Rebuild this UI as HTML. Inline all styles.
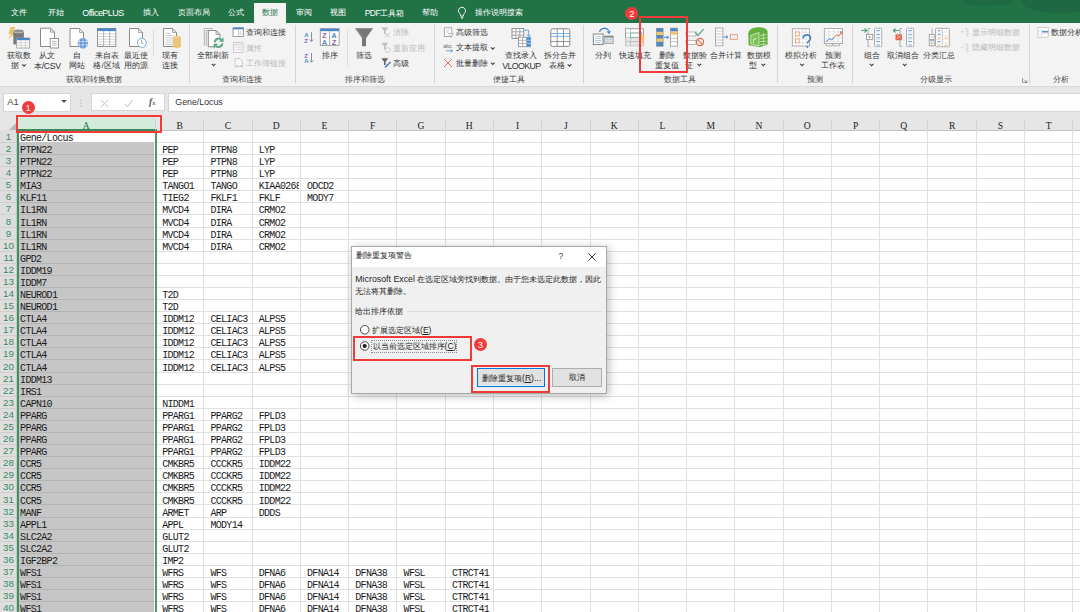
<!DOCTYPE html><html><head><meta charset="utf-8"><style>
*{margin:0;padding:0;box-sizing:border-box}
html,body{width:1080px;height:612px;overflow:hidden;background:#fff}
body{position:relative;font-family:"Liberation Sans",sans-serif;color:#262626}
.a{position:absolute}
.t{position:absolute;white-space:nowrap;line-height:1}
.tab{position:absolute;top:7.5px;font-size:7.7px;color:#fff;white-space:nowrap;line-height:10px}
.lb{position:absolute;font-size:7.8px;color:#333;white-space:nowrap;line-height:10px;transform:translateX(-50%)}
.gl{position:absolute;top:74px;font-size:7.6px;color:#444;white-space:nowrap;line-height:10px;transform:translateX(-50%)}
.sm{position:absolute;font-size:7.8px;color:#333;white-space:nowrap;line-height:10px}
.dis{color:#b9b9b9}
.sep{position:absolute;top:25px;height:58px;width:1px;background:#d4d4d4}
.cell{position:absolute;font-family:"Liberation Mono",monospace;font-size:10px;letter-spacing:-0.7px;color:#1a1a1a;white-space:nowrap;line-height:10px}
svg{position:absolute;overflow:visible}
.lat{font-size:8.8px;letter-spacing:-0.35px}
</style></head><body>
<div class="a" style="left:0;top:0;width:1080px;height:23px;background:#217346"></div>
<svg style="left:0;top:0" width="1080" height="23"><path d="M964 0V4.8C980 6.8 1000 5.8 1013 4.2V0Z" fill="#1f6a42"/><path d="M1022 0C1021 6 1030 11.5 1050 13C1062 13.6 1072 12.4 1080 11.5V0Z" fill="#1f6843"/></svg>
<div class="tab" style="left:10.8px">文件</div>
<div class="tab" style="left:48.3px">开始</div>
<div class="tab" style="left:82.3px"><span class="lat" style="font-size:9px;letter-spacing:-0.55px">OfficePLUS</span></div>
<div class="tab" style="left:143px">插入</div>
<div class="tab" style="left:177.5px">页面布局</div>
<div class="tab" style="left:227.5px">公式</div>
<div class="tab" style="left:295.8px">审阅</div>
<div class="tab" style="left:330px">视图</div>
<div class="tab" style="left:364.7px"><span class="lat" style="font-size:8.6px;letter-spacing:-0.6px">PDF</span>工具箱</div>
<div class="tab" style="left:421.7px">帮助</div>
<div class="tab" style="left:474.7px">操作说明搜索</div>
<div class="a" style="left:254px;top:3px;width:32px;height:20px;background:#f3f3f3"></div>
<div class="tab" style="left:261.7px;color:#217346">数据</div>
<svg style="left:456px;top:6px" width="12" height="13" viewBox="0 0 12 13"><path d="M6 1.2a3.6 3.6 0 0 0-2.2 6.4c.5.5.7 1 .7 1.6v.8h3v-.8c0-.6.2-1.1.7-1.6A3.6 3.6 0 0 0 6 1.2z" fill="none" stroke="#fff" stroke-width="0.9"/><path d="M4.6 11.2h2.8M5 12.2h2" stroke="#fff" stroke-width="0.8"/></svg>
<div class="a" style="left:0;top:23px;width:1080px;height:64px;background:#f3f3f3"></div>
<div class="a" style="left:0;top:86px;width:1080px;height:1px;background:#dadada"></div>
<div class="lb" style="left:18.6px;top:51px">获取数</div>
<div class="lb" style="left:15px;top:61px">据</div>
<div class="lb" style="left:47.3px;top:51px">从文</div>
<div class="lb" style="left:47.3px;top:61px">本<span class="lat">/CSV</span></div>
<div class="lb" style="left:77px;top:51px">自</div>
<div class="lb" style="left:77px;top:61px">网站</div>
<div class="lb" style="left:106.5px;top:51px">来自表</div>
<div class="lb" style="left:106.5px;top:61px">格/区域</div>
<div class="lb" style="left:136.4px;top:51px">最近使</div>
<div class="lb" style="left:136.4px;top:61px">用的源</div>
<div class="lb" style="left:170.4px;top:51px">现有</div>
<div class="lb" style="left:170.4px;top:61px">连接</div>
<div class="gl" style="left:94.3px;top:75px">获取和转换数据</div>
<div class="lb" style="left:212.5px;top:51px">全部刷新</div>
<div class="sm" style="left:245.6px;top:28.2px">查询和连接</div>
<div class="sm dis" style="left:245.6px;top:43.5px">属性</div>
<div class="sm dis" style="left:245.6px;top:59.3px">工作簿链接</div>
<div class="gl" style="left:242px;top:75px">查询和连接</div>
<div class="lb" style="left:330px;top:51px">排序</div>
<div class="lb" style="left:364.3px;top:51px">筛选</div>
<div class="sm dis" style="left:393px;top:28.3px">清除</div>
<div class="sm dis" style="left:393px;top:43.5px">重新应用</div>
<div class="sm" style="left:393px;top:59px">高级</div>
<div class="gl" style="left:364.8px;top:75px">排序和筛选</div>
<div class="sm" style="left:455.7px;top:28.3px">高级筛选</div>
<div class="sm" style="left:455.7px;top:43.3px">文本提取</div>
<div class="sm" style="left:455.7px;top:59px">批量删除</div>
<div class="lb" style="left:521px;top:51px">查找录入</div>
<div class="lb" style="left:521.3px;top:61px"><span class="lat" style="letter-spacing:-0.6px">VLOOKUP</span></div>
<div class="lb" style="left:560px;top:51px">拆分合并</div>
<div class="lb" style="left:557px;top:61px">表格</div>
<div class="gl" style="left:509.3px;top:75px">便捷工具</div>
<div class="lb" style="left:603px;top:51px">分列</div>
<div class="lb" style="left:634.8px;top:51px">快速填充</div>
<div class="lb" style="left:667px;top:51px">删除</div>
<div class="lb" style="left:666.8px;top:61px">重复值</div>
<div class="lb" style="left:695px;top:51px">数据验</div>
<div class="lb" style="left:689px;top:61px">证</div>
<div class="lb" style="left:726.4px;top:51px">合并计算</div>
<div class="lb" style="left:758.7px;top:51px">数据模</div>
<div class="lb" style="left:753px;top:61px">型</div>
<div class="gl" style="left:680px;top:75px">数据工具</div>
<div class="lb" style="left:801px;top:51px">模拟分析</div>
<div class="lb" style="left:833.3px;top:51px">预测</div>
<div class="lb" style="left:833px;top:61px">工作表</div>
<div class="gl" style="left:815px;top:75px">预测</div>
<div class="lb" style="left:872px;top:51px">组合</div>
<div class="lb" style="left:903px;top:51px">取消组合</div>
<div class="lb" style="left:938.9px;top:51px">分类汇总</div>
<div class="sm dis" style="left:971.7px;top:27.5px">显示明细数据</div>
<div class="sm dis" style="left:971.7px;top:43.2px">隐藏明细数据</div>
<div class="gl" style="left:935.8px;top:75px">分级显示</div>
<div class="sm" style="left:1050.5px;top:27.5px">数据分析</div>
<div class="gl" style="left:1061px;top:75px">分析</div>
<div class="sep" style="left:189.0px"></div>
<div class="sep" style="left:295.0px"></div>
<div class="sep" style="left:434.0px"></div>
<div class="sep" style="left:582.8px"></div>
<div class="sep" style="left:777.1px"></div>
<div class="sep" style="left:851.7px"></div>
<div class="sep" style="left:1029.3px"></div>
<div class="a" style="left:152.7px;top:29.7px;width:1px;height:26.900000000000002px;background:#dcdcdc"></div>
<div class="a" style="left:346.6px;top:29.8px;width:1px;height:35.900000000000006px;background:#dcdcdc"></div>
<svg style="left:0;top:0" width="1080" height="90" viewBox="0 0 1080 90"><path d="M22.2 64.3l1.8 1.8 1.8-1.8" fill="none" stroke="#444" stroke-width="1.1"/><path d="M567.7 64.39999999999999l1.8 1.8 1.8-1.8" fill="none" stroke="#444" stroke-width="1.1"/><path d="M10.5 27 L15.5 27 L12.8 32.5 L15.2 32.5 L8.3 39.8 L10.8 34 L8.4 34 Z" fill="#ecc46c"/><rect x="13.3" y="30.5" width="10.6" height="14" rx="1" fill="#7b7b7b"/><ellipse cx="18.6" cy="31" rx="5.3" ry="1.8" fill="#8f8f8f" stroke="#f3f3f3" stroke-width="0.5"/><rect x="16.7" y="38" width="13" height="10" fill="#fff" stroke="#999" stroke-width="0.8"/><rect x="16.7" y="38" width="13" height="2.2" fill="#4a86c8"/><path d="M16.7 42.7H29.7M16.7 45.3H29.7M21 40V48M25.4 40V48" stroke="#bbb" stroke-width="0.6"/><path d="M40.5 28.2H50.5L54.5 32.2V46.5H40.5Z" fill="#fff" stroke="#8a8a8a" stroke-width="1" stroke-linejoin="miter"/><path d="M50.5 28.2V32.2H54.5Z" fill="#e8e8e8" stroke="#8a8a8a" stroke-width="0.7" stroke-linejoin="miter"/><rect x="50.2" y="38.5" width="8.3" height="9.5" fill="#fff" stroke="#888" stroke-width="0.9"/><path d="M52 41.3h4.8M52 43.2h4.8M52 45.1h4.8" stroke="#888" stroke-width="0.6"/><path d="M70 28.5H79.5L83.5 32.5V46.5H70Z" fill="#fff" stroke="#8a8a8a" stroke-width="1" stroke-linejoin="miter"/><path d="M79.5 28.5V32.5H83.5Z" fill="#e8e8e8" stroke="#8a8a8a" stroke-width="0.7" stroke-linejoin="miter"/><circle cx="82.9" cy="43.2" r="5.2" fill="#5b93d3"/><path d="M77.8 41.6h10.2M77.8 44.8h10.2M82.9 38v10.4M80.2 38.6c-1.5 3-1.5 6.5 0 9.3M85.6 38.6c1.5 3 1.5 6.5 0 9.3" stroke="#fff" stroke-width="0.55" fill="none"/><rect x="97.5" y="28.5" width="18.3" height="18" fill="#fff" stroke="#888" stroke-width="0.9"/><rect x="97.5" y="28.3" width="18.3" height="2.8" fill="#4a86c8"/><path d="M97.5 33.8h18.3M97.5 36.5h18.3M97.5 39.2h18.3M97.5 41.9h18.3M97.5 44.5h18.3" stroke="#bbb" stroke-width="0.6"/><path d="M103.6 31V46.5M109.7 31V46.5" stroke="#999" stroke-width="0.7"/><path d="M129.5 28.5H138.5L142.5 32.5V46.5H129.5Z" fill="#fff" stroke="#8a8a8a" stroke-width="1" stroke-linejoin="miter"/><path d="M138.5 28.5V32.5H142.5Z" fill="#e8e8e8" stroke="#8a8a8a" stroke-width="0.7" stroke-linejoin="miter"/><circle cx="141.8" cy="42.9" r="4.5" fill="#fff" stroke="#7ea9d8" stroke-width="1"/><path d="M141.6 40.2v3h2" fill="none" stroke="#888" stroke-width="0.7"/><path d="M163.5 28.5H172.5L176.5 32.5V46.5H163.5Z" fill="#fff" stroke="#8a8a8a" stroke-width="1" stroke-linejoin="miter"/><path d="M172.5 28.5V32.5H176.5Z" fill="#e8e8e8" stroke="#8a8a8a" stroke-width="0.7" stroke-linejoin="miter"/><path d="M165.5 33.4h5M165.5 35.6h8M165.5 37.8h8M165.5 40h8M165.5 42.2h8M165.5 44.4h8" stroke="#aaa" stroke-width="0.6"/><path d="M173 37.5V46.5a4 1.4 0 0 0 8 0V37.5Z" fill="#ebc67a"/><ellipse cx="177" cy="37.5" rx="4" ry="1.4" fill="#f0d294" stroke="#e3b968" stroke-width="0.4"/><path d="M204.3 45.5V28.5H213M206.3 46V30.5H215" fill="none" stroke="#9a9a9a" stroke-width="0.7"/><path d="M208.3 30.5H216L220 34.5V46.8H208.3Z" fill="#fff" stroke="#8a8a8a" stroke-width="1" stroke-linejoin="miter"/><path d="M216 30.5V34.5H220Z" fill="#e8e8e8" stroke="#8a8a8a" stroke-width="0.7" stroke-linejoin="miter"/><circle cx="218.6" cy="42.8" r="5.6" fill="#f3f3f3"/><path d="M214.9 42.2a3.8 3.8 0 0 1 6.6-2.4M222.3 43.4a3.8 3.8 0 0 1-6.6 2.4" fill="none" stroke="#5fa684" stroke-width="2"/><path d="M223.6 37.2v4.6h-4.6zM213.6 48.4v-4.6h4.6z" fill="#5fa684"/><path d="M211.79999999999998 63.9l1.8 1.8 1.8-1.8" fill="none" stroke="#444" stroke-width="1.1"/><rect x="233" y="27.8" width="10.5" height="8.6" fill="#fff" stroke="#888" stroke-width="0.8"/><rect x="233" y="27.6" width="10.5" height="1.8" fill="#4a86c8"/><path d="M238.5 29.4V36.4M239.5 32h3M239.5 34h3" stroke="#aaa" stroke-width="0.6"/><rect x="233.5" y="42.6" width="9.5" height="9.8" fill="#f7f3f7" stroke="#c8c0c8" stroke-width="0.8"/><path d="M234 44.5h8.5M235.5 47h1M237.5 47h4M235.5 49.5h1M237.5 49.5h4" stroke="#c8c0c8" stroke-width="0.6"/><path d="M235 58.5h5l2.5 2.5V66.5H235Z" fill="#f7f3f7" stroke="#c8c0c8" stroke-width="0.8"/><path d="M237 67.5c-1.5 0-1.5-1.8 0-1.8h1.5M240 65.7h1.5c1.5 0 1.5 1.8 0 1.8" fill="none" stroke="#c8c0c8" stroke-width="0.6"/><text x="304.2" y="37" font-family="Liberation Sans" font-size="6" font-weight="bold" fill="#4f8bc9">A</text><text x="304.2" y="42.5" font-family="Liberation Sans" font-size="6" font-weight="bold" fill="#9159b5">Z</text><path d="M311.5 32.3V41M309.8 39.5l1.7 2 1.7-2" fill="none" stroke="#777" stroke-width="0.8"/><text x="304.2" y="57.8" font-family="Liberation Sans" font-size="6" font-weight="bold" fill="#9159b5">Z</text><text x="304.2" y="63.3" font-family="Liberation Sans" font-size="6" font-weight="bold" fill="#4f8bc9">A</text><path d="M311.5 53V61.8M309.8 60.3l1.7 2 1.7-2" fill="none" stroke="#777" stroke-width="0.8"/><rect x="320.3" y="28.8" width="18.8" height="16.6" fill="#fff" stroke="#999" stroke-width="0.9"/><rect x="320.3" y="28.6" width="18.8" height="2.6" fill="#4a86c8"/><path d="M329.7 31.2V45.4" stroke="#999" stroke-width="0.9"/><text x="322.3" y="37.6" font-family="Liberation Sans" font-size="7" font-weight="bold" fill="#9159b5">Z</text><text x="322" y="44.6" font-family="Liberation Sans" font-size="7" font-weight="bold" fill="#4f8bc9">A</text><text x="331.6" y="37.6" font-family="Liberation Sans" font-size="7" font-weight="bold" fill="#4f8bc9">A</text><text x="331.9" y="44.6" font-family="Liberation Sans" font-size="7" font-weight="bold" fill="#9159b5">Z</text><path d="M355 28.2H373L366 38.2V46.2H362V38.2Z" fill="#777"/><path d="M356.8 29.2L362.5 37.5" stroke="#aaa" stroke-width="0.6"/><path d="M381.3 27.5H388.3L385.6 31V34H384V31Z" fill="#bdbdbd"/><path d="M384.5 32.5l5.5 5M390 32.5l-5.5 5" stroke="#c4c4c4" stroke-width="0.8"/><path d="M381.3 42.8H388.3L385.6 46.3V49.3H384V46.3Z" fill="#bdbdbd"/><circle cx="387.8" cy="50" r="2.5" fill="none" stroke="#c4c4c4" stroke-width="0.8"/><path d="M381.3 58.3H388.3L385.6 61.8V65H384V61.8Z" fill="#666"/><path d="M385 67.3L390.7 62" stroke="#4a86c8" stroke-width="1.6"/><rect x="444.3" y="27.8" width="7.5" height="8.6" fill="#fff" stroke="#999" stroke-width="0.8"/><path d="M445.8 30h4.5M445.8 32h3" stroke="#9bbbe0" stroke-width="0.6"/><path d="M448.5 33.5h5l-2 2.3v1.5h-1v-1.5z" fill="#fff" stroke="#999" stroke-width="0.6"/><text x="443.2" y="48.4" font-family="Liberation Sans" font-size="5.5" fill="#666">abc</text><path d="M446 50.8h6.5M450.8 49.3l1.7 1.5-1.7 1.5" fill="none" stroke="#5b9bd5" stroke-width="0.9"/><path d="M444 59l8 8M452 59l-8 8" stroke="#ea5b5b" stroke-width="0.9"/><path d="M491.0 47.300000000000004l1.8 1.8 1.8-1.8" fill="none" stroke="#444" stroke-width="1.1"/><path d="M491.0 62.7l1.8 1.8 1.8-1.8" fill="none" stroke="#444" stroke-width="1.1"/><rect x="512" y="28.5" width="11.7" height="10" fill="#fff" stroke="#888" stroke-width="0.9"/><path d="M512 31.8h11.7M512 35.1h11.7M515.9 28.5v10M519.8 28.5v10" stroke="#888" stroke-width="0.7"/><rect x="518.5" y="37.2" width="12" height="9.5" fill="#fff" stroke="#999" stroke-width="0.9"/><path d="M518.5 40.3h12M518.5 43.5h12M522.5 37.2v9.5M526.5 37.2v9.5" stroke="#999" stroke-width="0.7"/><rect x="526.7" y="37.2" width="3.8" height="9.5" fill="#4a90d9"/><path d="M526.7 40.3h3.8M526.7 43.5h3.8" stroke="#fff" stroke-width="0.5"/><path d="M523.7 30.2h5v6M527 34.5l1.7 1.8 1.7-1.8" fill="none" stroke="#4a90d9" stroke-width="0.8"/><rect x="550.8" y="28.8" width="19" height="17.6" rx="1.5" fill="#fff" stroke="#888" stroke-width="1"/><path d="M557.2 28.8v17.6M563.5 28.8v17.6M550.8 41.5h19" stroke="#888" stroke-width="0.9"/><path d="M550.8 33.5h19M550.8 36.4h19" stroke="#5aa0dc" stroke-width="0.8"/><rect x="593.3" y="34" width="9.7" height="10.6" fill="#fff" stroke="#777" stroke-width="0.9"/><path d="M595 36.5h6.3M595 38.5h6.3M595 40.5h6.3M595 42.5h6.3" stroke="#7aaee0" stroke-width="0.6"/><rect x="604.2" y="36" width="9" height="7.6" fill="#ddd" stroke="#999" stroke-width="0.8"/><rect x="604.2" y="36" width="9" height="1.5" fill="#888"/><path d="M606 39.5h2M609.5 39.5h2M606 41.7h2M609.5 41.7h2" stroke="#8fb8e0" stroke-width="0.6"/><path d="M599.5 31.8c1-3.8 6.5-5 9.5-1.2" fill="none" stroke="#4a86c8" stroke-width="1.3"/><path d="M606.6 31.3h4.6l-2.3 3z" fill="#4a86c8"/><rect x="625.5" y="28.7" width="18" height="17" fill="#fff" stroke="#999" stroke-width="0.9"/><rect x="625.5" y="37.4" width="18" height="8.3" fill="#e6e6e6"/><path d="M625.5 33h18M625.5 37.4h18M625.5 41.6h18M630.5 28.7v17" stroke="#aaa" stroke-width="0.6"/><rect x="630.5" y="33" width="11" height="4.4" fill="none" stroke="#6db596" stroke-width="0.7"/><path d="M641.5 35.2L645.2 35.3 643 38.7 645 38.8 641 45.8 642 40.5 640.3 40.5Z" fill="#efc46a"/><rect x="656.5" y="28.2" width="6.6" height="18" fill="#4a86c8" stroke="#777" stroke-width="0.5"/><rect x="656.5" y="31.8" width="6.6" height="3.3" fill="#f0c56f"/><rect x="656.5" y="38.5" width="6.6" height="3.3" fill="#f0c56f"/><path d="M664 37.3h4.2M666.8 35.8l1.8 1.5-1.8 1.5" fill="none" stroke="#4a86c8" stroke-width="1"/><rect x="670.6" y="28.2" width="6.8" height="18" fill="#fff" stroke="#999" stroke-width="0.8"/><rect x="670.6" y="28.2" width="6.8" height="3.3" fill="#4a86c8"/><rect x="670.6" y="31.5" width="6.8" height="3.3" fill="#f0c56f"/><path d="M670.6 38.3h6.8M670.6 41.7h6.8" stroke="#999" stroke-width="0.6"/><rect x="686" y="32" width="10" height="4" fill="#fff" stroke="#999" stroke-width="0.7"/><rect x="686" y="40.3" width="10" height="4" fill="#fff" stroke="#999" stroke-width="0.7"/><path d="M695.2 32.5l2.6 3 5.8-6.3" fill="none" stroke="#5aa386" stroke-width="1.2"/><circle cx="700" cy="42" r="3.6" fill="#f3f3f3" stroke="#e06a4a" stroke-width="1.2"/><path d="M697.6 39.6l4.8 4.8" stroke="#e06a4a" stroke-width="1.1"/><path d="M697.5 63.9l1.8 1.8 1.8-1.8" fill="none" stroke="#444" stroke-width="1.1"/><rect x="715.5" y="28" width="7.4" height="17.8" fill="#fff" stroke="#999" stroke-width="0.8"/><path d="M715.5 31h7.4M715.5 34h7.4M715.5 37h7.4M715.5 40h7.4M715.5 43h7.4" stroke="#aaa" stroke-width="0.6"/><path d="M723.5 37h4.3M726.3 35.6l1.6 1.4-1.6 1.4" fill="none" stroke="#4a86c8" stroke-width="1"/><rect x="730.3" y="34.8" width="7" height="4.4" fill="#fff" stroke="#e07a6a" stroke-width="0.8"/><path d="M732 37h3.6" stroke="#9ab" stroke-width="0.5"/><path d="M748.3 33.2C748.8 29.2 753.5 27.2 758.8 27.2C764 27.2 767.4 29 767.6 31.5V44.6L759.5 47.2L748.6 45.2Z" fill="#62b13f"/><path d="M750.8 35.3L759 32.6V46.2L750.8 44.2Z" fill="#7cc257" stroke="#e9f5e2" stroke-width="0.7"/><path d="M760 35.6L766.6 34.6M760 38.6L766.6 37.9M760 41.6L766.6 41.1M760 44.6L766.6 44.2M763.3 33.2V45.6" stroke="#e9f5e2" stroke-width="0.6"/><path d="M753.5 43.5V39.5l2.2 -1M755.7 38.5l-1.2-0.2M755.7 38.5l-.3 1.2" fill="none" stroke="#fff" stroke-width="0.6"/><path d="M761.5 63.9l1.8 1.8 1.8-1.8" fill="none" stroke="#444" stroke-width="1.1"/><rect x="792.3" y="28.8" width="17.2" height="17.2" fill="#fff" stroke="#999" stroke-width="0.8"/><path d="M792.3 32.2h17.2M792.3 35.6h17.2M792.3 39h17.2M792.3 42.4h17.2M795.8 28.8v17.2M799.2 28.8v17.2M802.6 28.8v17.2M806 28.8v17.2" stroke="#ccc" stroke-width="0.5"/><rect x="795.5" y="32" width="3.8" height="3.8" fill="#fff" stroke="#f0a070" stroke-width="0.9"/><rect x="795.5" y="39" width="3.8" height="3.8" fill="#fff" stroke="#f0a070" stroke-width="0.9"/><path d="M803.2 38.5c0-2.5 1.8-3.6 3.7-3.6 2.2 0 3.7 1.3 3.7 3.3 0 2.6-3.3 2.6-3.3 5.3" fill="none" stroke="#4a86c8" stroke-width="1.6"/><circle cx="807.3" cy="46.8" r="1.1" fill="#4a86c8"/><path d="M800.2 63.9l1.8 1.8 1.8-1.8" fill="none" stroke="#444" stroke-width="1.1"/><rect x="824.3" y="28.6" width="18" height="15" fill="#fff" stroke="#999" stroke-width="0.8"/><path d="M824.3 31.8h18M824.3 35h18M824.3 38.2h18M824.3 41.4h18M828.8 28.6v15M833.3 28.6v15M837.8 28.6v15" stroke="#ccc" stroke-width="0.5"/><path d="M825.8 42l3.5-3.5 2.5 1.5 2.5-3" fill="none" stroke="#4a86c8" stroke-width="1"/><path d="M834.3 37l2.5-2 2 1.2 2.8-4" fill="none" stroke="#e0633e" stroke-width="1"/><path d="M839.5 31.5h3v3z" fill="#e0633e"/><path d="M826 43.6v2.2h6.3v-2.2M833.3 43.6v2.2h6.3v-2.2" fill="none" stroke="#999" stroke-width="0.7"/><path d="M868 28.5v18M868 28.5h2M868 46.5h2" fill="none" stroke="#999" stroke-width="0.8"/><rect x="874.5" y="28.3" width="7.2" height="18.4" rx="1" fill="#fff" stroke="#999" stroke-width="0.8"/><path d="M876.3 30.7h3.6" stroke="#5b93d3" stroke-width="0.9"/><path d="M874.5 32.1h7.2" stroke="#ccc" stroke-width="0.5"/><path d="M876.3 34.3h3.6" stroke="#5b93d3" stroke-width="0.9"/><path d="M874.5 35.699999999999996h7.2" stroke="#ccc" stroke-width="0.5"/><path d="M876.3 37.9h3.6" stroke="#5b93d3" stroke-width="0.9"/><path d="M874.5 39.3h7.2" stroke="#ccc" stroke-width="0.5"/><path d="M876.3 41.5h3.6" stroke="#5b93d3" stroke-width="0.9"/><path d="M874.5 42.9h7.2" stroke="#ccc" stroke-width="0.5"/><path d="M876.3 45.1h3.6" stroke="#5b93d3" stroke-width="0.9"/><path d="M874.5 46.5h7.2" stroke="#ccc" stroke-width="0.5"/><path d="M861 30.5h5.5M864.5 28.5l2.3 2-2.3 2" fill="none" stroke="#5aa386" stroke-width="1.2"/><rect x="866.5" y="34.6" width="6.3" height="5" fill="#fff" stroke="#888" stroke-width="0.7"/><path d="M868 37.1h3.3M869.65 35.5v3.3" stroke="#777" stroke-width="0.5"/><path d="M869.9000000000001 63.9l1.8 1.8 1.8-1.8" fill="none" stroke="#444" stroke-width="1.1"/><path d="M900 28.5v18M900 28.5h2M900 46.5h2" fill="none" stroke="#999" stroke-width="0.8"/><rect x="906.5" y="28.3" width="7.2" height="18.4" rx="1" fill="#fff" stroke="#999" stroke-width="0.8"/><path d="M908.3 30.7h3.6" stroke="#5b93d3" stroke-width="0.9"/><path d="M906.5 32.1h7.2" stroke="#ccc" stroke-width="0.5"/><path d="M908.3 34.3h3.6" stroke="#5b93d3" stroke-width="0.9"/><path d="M906.5 35.699999999999996h7.2" stroke="#ccc" stroke-width="0.5"/><path d="M908.3 37.9h3.6" stroke="#5b93d3" stroke-width="0.9"/><path d="M906.5 39.3h7.2" stroke="#ccc" stroke-width="0.5"/><path d="M908.3 41.5h3.6" stroke="#5b93d3" stroke-width="0.9"/><path d="M906.5 42.9h7.2" stroke="#ccc" stroke-width="0.5"/><path d="M908.3 45.1h3.6" stroke="#5b93d3" stroke-width="0.9"/><path d="M906.5 46.5h7.2" stroke="#ccc" stroke-width="0.5"/><path d="M899.5 30.5h-6M895.6 28.5l-2.3 2 2.3 2" fill="none" stroke="#5aa386" stroke-width="1.2"/><rect x="895.5" y="34.2" width="6.4" height="6" fill="#e0634a"/><path d="M897 38.8l3.4-3.4M897.2 35.5h0.8M900 38.8h0.4" stroke="#fff" stroke-width="0.8"/><path d="M902.9000000000001 63.9l1.8 1.8 1.8-1.8" fill="none" stroke="#444" stroke-width="1.1"/><path d="M932 28.5v18" stroke="#999" stroke-width="0.8"/><rect x="929.2" y="34.4" width="5" height="5" fill="#fff" stroke="#888" stroke-width="0.7"/><rect x="929.2" y="40.8" width="5" height="5" fill="#fff" stroke="#888" stroke-width="0.7"/><path d="M930.5 36.9h2.4M930.5 43.3h2.4M931.7 42v2.6" stroke="#777" stroke-width="0.5"/><rect x="935.5" y="28.3" width="13.8" height="18.4" rx="1" fill="#fff" stroke="#999" stroke-width="0.8"/><path d="M942.4 28.3v18.4" stroke="#aaa" stroke-width="0.6"/><path d="M935.5 32.1h13.8" stroke="#ccc" stroke-width="0.5"/><path d="M937.6 30.7h3" stroke="#5b93d3" stroke-width="0.9"/><path d="M935.5 35.699999999999996h13.8" stroke="#ccc" stroke-width="0.5"/><path d="M937.6 34.3h3" stroke="#5b93d3" stroke-width="0.9"/><path d="M935.5 39.3h13.8" stroke="#ccc" stroke-width="0.5"/><path d="M937.6 37.9h3" stroke="#f0a060" stroke-width="0.9"/><path d="M944.5 37.9h3" stroke="#f0a060" stroke-width="0.9"/><path d="M935.5 42.9h13.8" stroke="#ccc" stroke-width="0.5"/><path d="M937.6 41.5h3" stroke="#5b93d3" stroke-width="0.9"/><path d="M935.5 46.5h13.8" stroke="#ccc" stroke-width="0.5"/><path d="M937.6 45.1h3" stroke="#f0a060" stroke-width="0.9"/><path d="M944.5 45.1h3" stroke="#f0a060" stroke-width="0.9"/><path d="M960.5 31.8h4M962.5 29.8v4M965 28.5h3.5M966.5 31h2.5M966.5 33.5h2.5M966.5 36h2.5M966.8 28.5v8" stroke="#cfcfcf" stroke-width="0.7" fill="none"/><path d="M960.5 47.2h4M965 44h3.5M966.5 46.5h2.5M966.5 49h2.5M966.5 51.5h2.5M966.8 44v8" stroke="#cfcfcf" stroke-width="0.7" fill="none"/><path d="M1022.5 78v4.3h4.3M1024 79.5l3 3M1027 80.5v2h-2" fill="none" stroke="#777" stroke-width="0.7"/><rect x="1038" y="27.6" width="10.2" height="9.6" fill="#fff" stroke="#bbb" stroke-width="0.7"/><path d="M1041.5 27.6v9.6M1038 31h10.2M1038 34h10.2" stroke="#ccc" stroke-width="0.5"/><path d="M1042 31.8h6.3" stroke="#4a86c8" stroke-width="1.4"/></svg>
<div class="a" style="left:0;top:87px;width:1080px;height:25px;background:#e6e6e6"></div>
<div class="a" style="left:2.5px;top:93px;width:68px;height:18.5px;background:#fff;border:1px solid #d6d6d6"></div>
<div class="t" style="left:7.2px;top:98.4px;font-size:9.3px;color:#444">A1</div>
<svg style="left:61px;top:100px" width="6" height="3"><path d="M0 0h6L3 3z" fill="#555"/></svg>
<svg style="left:80px;top:99px" width="2" height="8"><circle cx="1" cy="1" r=".6" fill="#999"/><circle cx="1" cy="4" r=".6" fill="#999"/><circle cx="1" cy="7" r=".6" fill="#999"/></svg>
<div class="a" style="left:91px;top:93px;width:73.5px;height:18.2px;background:#fff;border:1px solid #d6d6d6"></div>
<svg style="left:99.5px;top:98.5px" width="9" height="9"><path d="M1 1l7 7M8 1l-7 7" stroke="#b5b5b5" stroke-width="0.9"/></svg>
<svg style="left:123.5px;top:98.5px" width="9" height="9"><path d="M1 5l2.5 2.8L8.5 1" fill="none" stroke="#b5b5b5" stroke-width="0.9"/></svg>
<div class="t" style="left:149px;top:98.2px;font-family:'Liberation Serif',serif;font-style:italic;font-weight:bold;font-size:9.5px;color:#555">f<span style="font-size:6.5px">x</span></div>
<div class="a" style="left:167.5px;top:93px;width:920px;height:18.8px;background:#fdfdfd;border:1px solid #d6d6d6"></div>
<div class="t" style="left:175.3px;top:97.5px;font-size:8.8px;color:#333">Gene/Locus</div>
<div class="a" style="left:0;top:111.5px;width:1080px;height:18.849999999999994px;background:#e6e6e6"></div>
<div class="a" style="left:0;top:129.85px;width:1080px;height:1px;background:#c4c4c4"></div>
<div class="a" style="left:0;top:130.35px;width:17px;height:500px;background:#dedede"></div>
<div class="a" style="left:17px;top:116.5px;width:138.5px;height:13.849999999999994px;background:#d3ebdd"></div>
<div class="a" style="left:17px;top:128.85px;width:139.5px;height:2px;background:#3a8a5c"></div>
<svg style="left:9px;top:123px" width="7" height="7"><path d="M7 0V7H0z" fill="#b8b8b8"/></svg>
<div class="a" style="left:155.00px;top:118.5px;width:1px;height:11.849999999999994px;background:#d0d0d0"></div>
<div class="a" style="left:203.28px;top:118.5px;width:1px;height:11.849999999999994px;background:#d0d0d0"></div>
<div class="a" style="left:251.56px;top:118.5px;width:1px;height:11.849999999999994px;background:#d0d0d0"></div>
<div class="a" style="left:299.84px;top:118.5px;width:1px;height:11.849999999999994px;background:#d0d0d0"></div>
<div class="a" style="left:348.12px;top:118.5px;width:1px;height:11.849999999999994px;background:#d0d0d0"></div>
<div class="a" style="left:396.40px;top:118.5px;width:1px;height:11.849999999999994px;background:#d0d0d0"></div>
<div class="a" style="left:444.68px;top:118.5px;width:1px;height:11.849999999999994px;background:#d0d0d0"></div>
<div class="a" style="left:492.96px;top:118.5px;width:1px;height:11.849999999999994px;background:#d0d0d0"></div>
<div class="a" style="left:541.24px;top:118.5px;width:1px;height:11.849999999999994px;background:#d0d0d0"></div>
<div class="a" style="left:589.52px;top:118.5px;width:1px;height:11.849999999999994px;background:#d0d0d0"></div>
<div class="a" style="left:637.80px;top:118.5px;width:1px;height:11.849999999999994px;background:#d0d0d0"></div>
<div class="a" style="left:686.08px;top:118.5px;width:1px;height:11.849999999999994px;background:#d0d0d0"></div>
<div class="a" style="left:734.36px;top:118.5px;width:1px;height:11.849999999999994px;background:#d0d0d0"></div>
<div class="a" style="left:782.64px;top:118.5px;width:1px;height:11.849999999999994px;background:#d0d0d0"></div>
<div class="a" style="left:830.92px;top:118.5px;width:1px;height:11.849999999999994px;background:#d0d0d0"></div>
<div class="a" style="left:879.20px;top:118.5px;width:1px;height:11.849999999999994px;background:#d0d0d0"></div>
<div class="a" style="left:927.48px;top:118.5px;width:1px;height:11.849999999999994px;background:#d0d0d0"></div>
<div class="a" style="left:975.76px;top:118.5px;width:1px;height:11.849999999999994px;background:#d0d0d0"></div>
<div class="a" style="left:1024.04px;top:118.5px;width:1px;height:11.849999999999994px;background:#d0d0d0"></div>
<div class="a" style="left:1072.32px;top:118.5px;width:1px;height:11.849999999999994px;background:#d0d0d0"></div>
<div class="t" style="left:81.25px;top:120.5px;font-family:'Liberation Serif',serif;font-size:9.6px;color:#217346;width:10px;text-align:center;line-height:10px">A</div>
<div class="t" style="left:174.64px;top:120.5px;font-family:'Liberation Serif',serif;font-size:9.6px;color:#222;width:10px;text-align:center;line-height:10px">B</div>
<div class="t" style="left:222.92px;top:120.5px;font-family:'Liberation Serif',serif;font-size:9.6px;color:#222;width:10px;text-align:center;line-height:10px">C</div>
<div class="t" style="left:271.20px;top:120.5px;font-family:'Liberation Serif',serif;font-size:9.6px;color:#222;width:10px;text-align:center;line-height:10px">D</div>
<div class="t" style="left:319.48px;top:120.5px;font-family:'Liberation Serif',serif;font-size:9.6px;color:#222;width:10px;text-align:center;line-height:10px">E</div>
<div class="t" style="left:367.76px;top:120.5px;font-family:'Liberation Serif',serif;font-size:9.6px;color:#222;width:10px;text-align:center;line-height:10px">F</div>
<div class="t" style="left:416.04px;top:120.5px;font-family:'Liberation Serif',serif;font-size:9.6px;color:#222;width:10px;text-align:center;line-height:10px">G</div>
<div class="t" style="left:464.32px;top:120.5px;font-family:'Liberation Serif',serif;font-size:9.6px;color:#222;width:10px;text-align:center;line-height:10px">H</div>
<div class="t" style="left:512.60px;top:120.5px;font-family:'Liberation Serif',serif;font-size:9.6px;color:#222;width:10px;text-align:center;line-height:10px">I</div>
<div class="t" style="left:560.88px;top:120.5px;font-family:'Liberation Serif',serif;font-size:9.6px;color:#222;width:10px;text-align:center;line-height:10px">J</div>
<div class="t" style="left:609.16px;top:120.5px;font-family:'Liberation Serif',serif;font-size:9.6px;color:#222;width:10px;text-align:center;line-height:10px">K</div>
<div class="t" style="left:657.44px;top:120.5px;font-family:'Liberation Serif',serif;font-size:9.6px;color:#222;width:10px;text-align:center;line-height:10px">L</div>
<div class="t" style="left:705.72px;top:120.5px;font-family:'Liberation Serif',serif;font-size:9.6px;color:#222;width:10px;text-align:center;line-height:10px">M</div>
<div class="t" style="left:754.00px;top:120.5px;font-family:'Liberation Serif',serif;font-size:9.6px;color:#222;width:10px;text-align:center;line-height:10px">N</div>
<div class="t" style="left:802.28px;top:120.5px;font-family:'Liberation Serif',serif;font-size:9.6px;color:#222;width:10px;text-align:center;line-height:10px">O</div>
<div class="t" style="left:850.56px;top:120.5px;font-family:'Liberation Serif',serif;font-size:9.6px;color:#222;width:10px;text-align:center;line-height:10px">P</div>
<div class="t" style="left:898.84px;top:120.5px;font-family:'Liberation Serif',serif;font-size:9.6px;color:#222;width:10px;text-align:center;line-height:10px">Q</div>
<div class="t" style="left:947.12px;top:120.5px;font-family:'Liberation Serif',serif;font-size:9.6px;color:#222;width:10px;text-align:center;line-height:10px">R</div>
<div class="t" style="left:995.40px;top:120.5px;font-family:'Liberation Serif',serif;font-size:9.6px;color:#222;width:10px;text-align:center;line-height:10px">S</div>
<div class="t" style="left:1043.68px;top:120.5px;font-family:'Liberation Serif',serif;font-size:9.6px;color:#222;width:10px;text-align:center;line-height:10px">T</div>
<div class="a" style="left:17px;top:141.94px;width:1063px;height:1px;background:#e0e0e0"></div>
<div class="a" style="left:0;top:141.94px;width:17px;height:1px;background:#cfcfcf"></div>
<div class="a" style="left:17px;top:154.02px;width:1063px;height:1px;background:#e0e0e0"></div>
<div class="a" style="left:0;top:154.02px;width:17px;height:1px;background:#cfcfcf"></div>
<div class="a" style="left:17px;top:166.10px;width:1063px;height:1px;background:#e0e0e0"></div>
<div class="a" style="left:0;top:166.10px;width:17px;height:1px;background:#cfcfcf"></div>
<div class="a" style="left:17px;top:178.19px;width:1063px;height:1px;background:#e0e0e0"></div>
<div class="a" style="left:0;top:178.19px;width:17px;height:1px;background:#cfcfcf"></div>
<div class="a" style="left:17px;top:190.28px;width:1063px;height:1px;background:#e0e0e0"></div>
<div class="a" style="left:0;top:190.28px;width:17px;height:1px;background:#cfcfcf"></div>
<div class="a" style="left:17px;top:202.36px;width:1063px;height:1px;background:#e0e0e0"></div>
<div class="a" style="left:0;top:202.36px;width:17px;height:1px;background:#cfcfcf"></div>
<div class="a" style="left:17px;top:214.44px;width:1063px;height:1px;background:#e0e0e0"></div>
<div class="a" style="left:0;top:214.44px;width:17px;height:1px;background:#cfcfcf"></div>
<div class="a" style="left:17px;top:226.53px;width:1063px;height:1px;background:#e0e0e0"></div>
<div class="a" style="left:0;top:226.53px;width:17px;height:1px;background:#cfcfcf"></div>
<div class="a" style="left:17px;top:238.62px;width:1063px;height:1px;background:#e0e0e0"></div>
<div class="a" style="left:0;top:238.62px;width:17px;height:1px;background:#cfcfcf"></div>
<div class="a" style="left:17px;top:250.70px;width:1063px;height:1px;background:#e0e0e0"></div>
<div class="a" style="left:0;top:250.70px;width:17px;height:1px;background:#cfcfcf"></div>
<div class="a" style="left:17px;top:262.78px;width:1063px;height:1px;background:#e0e0e0"></div>
<div class="a" style="left:0;top:262.78px;width:17px;height:1px;background:#cfcfcf"></div>
<div class="a" style="left:17px;top:274.87px;width:1063px;height:1px;background:#e0e0e0"></div>
<div class="a" style="left:0;top:274.87px;width:17px;height:1px;background:#cfcfcf"></div>
<div class="a" style="left:17px;top:286.96px;width:1063px;height:1px;background:#e0e0e0"></div>
<div class="a" style="left:0;top:286.96px;width:17px;height:1px;background:#cfcfcf"></div>
<div class="a" style="left:17px;top:299.04px;width:1063px;height:1px;background:#e0e0e0"></div>
<div class="a" style="left:0;top:299.04px;width:17px;height:1px;background:#cfcfcf"></div>
<div class="a" style="left:17px;top:311.12px;width:1063px;height:1px;background:#e0e0e0"></div>
<div class="a" style="left:0;top:311.12px;width:17px;height:1px;background:#cfcfcf"></div>
<div class="a" style="left:17px;top:323.21px;width:1063px;height:1px;background:#e0e0e0"></div>
<div class="a" style="left:0;top:323.21px;width:17px;height:1px;background:#cfcfcf"></div>
<div class="a" style="left:17px;top:335.30px;width:1063px;height:1px;background:#e0e0e0"></div>
<div class="a" style="left:0;top:335.30px;width:17px;height:1px;background:#cfcfcf"></div>
<div class="a" style="left:17px;top:347.38px;width:1063px;height:1px;background:#e0e0e0"></div>
<div class="a" style="left:0;top:347.38px;width:17px;height:1px;background:#cfcfcf"></div>
<div class="a" style="left:17px;top:359.47px;width:1063px;height:1px;background:#e0e0e0"></div>
<div class="a" style="left:0;top:359.47px;width:17px;height:1px;background:#cfcfcf"></div>
<div class="a" style="left:17px;top:371.55px;width:1063px;height:1px;background:#e0e0e0"></div>
<div class="a" style="left:0;top:371.55px;width:17px;height:1px;background:#cfcfcf"></div>
<div class="a" style="left:17px;top:383.63px;width:1063px;height:1px;background:#e0e0e0"></div>
<div class="a" style="left:0;top:383.63px;width:17px;height:1px;background:#cfcfcf"></div>
<div class="a" style="left:17px;top:395.72px;width:1063px;height:1px;background:#e0e0e0"></div>
<div class="a" style="left:0;top:395.72px;width:17px;height:1px;background:#cfcfcf"></div>
<div class="a" style="left:17px;top:407.81px;width:1063px;height:1px;background:#e0e0e0"></div>
<div class="a" style="left:0;top:407.81px;width:17px;height:1px;background:#cfcfcf"></div>
<div class="a" style="left:17px;top:419.89px;width:1063px;height:1px;background:#e0e0e0"></div>
<div class="a" style="left:0;top:419.89px;width:17px;height:1px;background:#cfcfcf"></div>
<div class="a" style="left:17px;top:431.98px;width:1063px;height:1px;background:#e0e0e0"></div>
<div class="a" style="left:0;top:431.98px;width:17px;height:1px;background:#cfcfcf"></div>
<div class="a" style="left:17px;top:444.06px;width:1063px;height:1px;background:#e0e0e0"></div>
<div class="a" style="left:0;top:444.06px;width:17px;height:1px;background:#cfcfcf"></div>
<div class="a" style="left:17px;top:456.14px;width:1063px;height:1px;background:#e0e0e0"></div>
<div class="a" style="left:0;top:456.14px;width:17px;height:1px;background:#cfcfcf"></div>
<div class="a" style="left:17px;top:468.23px;width:1063px;height:1px;background:#e0e0e0"></div>
<div class="a" style="left:0;top:468.23px;width:17px;height:1px;background:#cfcfcf"></div>
<div class="a" style="left:17px;top:480.32px;width:1063px;height:1px;background:#e0e0e0"></div>
<div class="a" style="left:0;top:480.32px;width:17px;height:1px;background:#cfcfcf"></div>
<div class="a" style="left:17px;top:492.40px;width:1063px;height:1px;background:#e0e0e0"></div>
<div class="a" style="left:0;top:492.40px;width:17px;height:1px;background:#cfcfcf"></div>
<div class="a" style="left:17px;top:504.49px;width:1063px;height:1px;background:#e0e0e0"></div>
<div class="a" style="left:0;top:504.49px;width:17px;height:1px;background:#cfcfcf"></div>
<div class="a" style="left:17px;top:516.57px;width:1063px;height:1px;background:#e0e0e0"></div>
<div class="a" style="left:0;top:516.57px;width:17px;height:1px;background:#cfcfcf"></div>
<div class="a" style="left:17px;top:528.65px;width:1063px;height:1px;background:#e0e0e0"></div>
<div class="a" style="left:0;top:528.65px;width:17px;height:1px;background:#cfcfcf"></div>
<div class="a" style="left:17px;top:540.74px;width:1063px;height:1px;background:#e0e0e0"></div>
<div class="a" style="left:0;top:540.74px;width:17px;height:1px;background:#cfcfcf"></div>
<div class="a" style="left:17px;top:552.83px;width:1063px;height:1px;background:#e0e0e0"></div>
<div class="a" style="left:0;top:552.83px;width:17px;height:1px;background:#cfcfcf"></div>
<div class="a" style="left:17px;top:564.91px;width:1063px;height:1px;background:#e0e0e0"></div>
<div class="a" style="left:0;top:564.91px;width:17px;height:1px;background:#cfcfcf"></div>
<div class="a" style="left:17px;top:577.00px;width:1063px;height:1px;background:#e0e0e0"></div>
<div class="a" style="left:0;top:577.00px;width:17px;height:1px;background:#cfcfcf"></div>
<div class="a" style="left:17px;top:589.08px;width:1063px;height:1px;background:#e0e0e0"></div>
<div class="a" style="left:0;top:589.08px;width:17px;height:1px;background:#cfcfcf"></div>
<div class="a" style="left:17px;top:601.17px;width:1063px;height:1px;background:#e0e0e0"></div>
<div class="a" style="left:0;top:601.17px;width:17px;height:1px;background:#cfcfcf"></div>
<div class="a" style="left:17px;top:613.25px;width:1063px;height:1px;background:#e0e0e0"></div>
<div class="a" style="left:0;top:613.25px;width:17px;height:1px;background:#cfcfcf"></div>
<div class="a" style="left:155.00px;top:130.35px;width:1px;height:500px;background:#e0e0e0"></div>
<div class="a" style="left:203.28px;top:130.35px;width:1px;height:500px;background:#e0e0e0"></div>
<div class="a" style="left:251.56px;top:130.35px;width:1px;height:500px;background:#e0e0e0"></div>
<div class="a" style="left:299.84px;top:130.35px;width:1px;height:500px;background:#e0e0e0"></div>
<div class="a" style="left:348.12px;top:130.35px;width:1px;height:500px;background:#e0e0e0"></div>
<div class="a" style="left:396.40px;top:130.35px;width:1px;height:500px;background:#e0e0e0"></div>
<div class="a" style="left:444.68px;top:130.35px;width:1px;height:500px;background:#e0e0e0"></div>
<div class="a" style="left:492.96px;top:130.35px;width:1px;height:500px;background:#e0e0e0"></div>
<div class="a" style="left:541.24px;top:130.35px;width:1px;height:500px;background:#e0e0e0"></div>
<div class="a" style="left:589.52px;top:130.35px;width:1px;height:500px;background:#e0e0e0"></div>
<div class="a" style="left:637.80px;top:130.35px;width:1px;height:500px;background:#e0e0e0"></div>
<div class="a" style="left:686.08px;top:130.35px;width:1px;height:500px;background:#e0e0e0"></div>
<div class="a" style="left:734.36px;top:130.35px;width:1px;height:500px;background:#e0e0e0"></div>
<div class="a" style="left:782.64px;top:130.35px;width:1px;height:500px;background:#e0e0e0"></div>
<div class="a" style="left:830.92px;top:130.35px;width:1px;height:500px;background:#e0e0e0"></div>
<div class="a" style="left:879.20px;top:130.35px;width:1px;height:500px;background:#e0e0e0"></div>
<div class="a" style="left:927.48px;top:130.35px;width:1px;height:500px;background:#e0e0e0"></div>
<div class="a" style="left:975.76px;top:130.35px;width:1px;height:500px;background:#e0e0e0"></div>
<div class="a" style="left:1024.04px;top:130.35px;width:1px;height:500px;background:#e0e0e0"></div>
<div class="a" style="left:1072.32px;top:130.35px;width:1px;height:500px;background:#e0e0e0"></div>
<div class="a" style="left:19px;top:142.435px;width:135.0px;height:500px;background:#c6c6c6"></div>
<div class="a" style="left:19px;top:154.02px;width:135.0px;height:1px;background:#b4b4b4"></div>
<div class="a" style="left:19px;top:166.10px;width:135.0px;height:1px;background:#b4b4b4"></div>
<div class="a" style="left:19px;top:178.19px;width:135.0px;height:1px;background:#b4b4b4"></div>
<div class="a" style="left:19px;top:190.28px;width:135.0px;height:1px;background:#b4b4b4"></div>
<div class="a" style="left:19px;top:202.36px;width:135.0px;height:1px;background:#b4b4b4"></div>
<div class="a" style="left:19px;top:214.44px;width:135.0px;height:1px;background:#b4b4b4"></div>
<div class="a" style="left:19px;top:226.53px;width:135.0px;height:1px;background:#b4b4b4"></div>
<div class="a" style="left:19px;top:238.62px;width:135.0px;height:1px;background:#b4b4b4"></div>
<div class="a" style="left:19px;top:250.70px;width:135.0px;height:1px;background:#b4b4b4"></div>
<div class="a" style="left:19px;top:262.78px;width:135.0px;height:1px;background:#b4b4b4"></div>
<div class="a" style="left:19px;top:274.87px;width:135.0px;height:1px;background:#b4b4b4"></div>
<div class="a" style="left:19px;top:286.96px;width:135.0px;height:1px;background:#b4b4b4"></div>
<div class="a" style="left:19px;top:299.04px;width:135.0px;height:1px;background:#b4b4b4"></div>
<div class="a" style="left:19px;top:311.12px;width:135.0px;height:1px;background:#b4b4b4"></div>
<div class="a" style="left:19px;top:323.21px;width:135.0px;height:1px;background:#b4b4b4"></div>
<div class="a" style="left:19px;top:335.30px;width:135.0px;height:1px;background:#b4b4b4"></div>
<div class="a" style="left:19px;top:347.38px;width:135.0px;height:1px;background:#b4b4b4"></div>
<div class="a" style="left:19px;top:359.47px;width:135.0px;height:1px;background:#b4b4b4"></div>
<div class="a" style="left:19px;top:371.55px;width:135.0px;height:1px;background:#b4b4b4"></div>
<div class="a" style="left:19px;top:383.63px;width:135.0px;height:1px;background:#b4b4b4"></div>
<div class="a" style="left:19px;top:395.72px;width:135.0px;height:1px;background:#b4b4b4"></div>
<div class="a" style="left:19px;top:407.81px;width:135.0px;height:1px;background:#b4b4b4"></div>
<div class="a" style="left:19px;top:419.89px;width:135.0px;height:1px;background:#b4b4b4"></div>
<div class="a" style="left:19px;top:431.98px;width:135.0px;height:1px;background:#b4b4b4"></div>
<div class="a" style="left:19px;top:444.06px;width:135.0px;height:1px;background:#b4b4b4"></div>
<div class="a" style="left:19px;top:456.14px;width:135.0px;height:1px;background:#b4b4b4"></div>
<div class="a" style="left:19px;top:468.23px;width:135.0px;height:1px;background:#b4b4b4"></div>
<div class="a" style="left:19px;top:480.32px;width:135.0px;height:1px;background:#b4b4b4"></div>
<div class="a" style="left:19px;top:492.40px;width:135.0px;height:1px;background:#b4b4b4"></div>
<div class="a" style="left:19px;top:504.49px;width:135.0px;height:1px;background:#b4b4b4"></div>
<div class="a" style="left:19px;top:516.57px;width:135.0px;height:1px;background:#b4b4b4"></div>
<div class="a" style="left:19px;top:528.65px;width:135.0px;height:1px;background:#b4b4b4"></div>
<div class="a" style="left:19px;top:540.74px;width:135.0px;height:1px;background:#b4b4b4"></div>
<div class="a" style="left:19px;top:552.83px;width:135.0px;height:1px;background:#b4b4b4"></div>
<div class="a" style="left:19px;top:564.91px;width:135.0px;height:1px;background:#b4b4b4"></div>
<div class="a" style="left:19px;top:577.00px;width:135.0px;height:1px;background:#b4b4b4"></div>
<div class="a" style="left:19px;top:589.08px;width:135.0px;height:1px;background:#b4b4b4"></div>
<div class="a" style="left:19px;top:601.17px;width:135.0px;height:1px;background:#b4b4b4"></div>
<div class="a" style="left:19px;top:613.25px;width:135.0px;height:1px;background:#b4b4b4"></div>
<div class="a" style="left:16px;top:130.35px;width:1px;height:500px;background:#c8c8c8"></div>
<div class="a" style="left:17px;top:130.35px;width:2px;height:500px;background:#3f9163"></div>
<div class="a" style="left:155.0px;top:130.35px;width:2px;height:500px;background:#4a9a6c"></div>
<div class="t" style="left:0;width:17px;text-align:center;top:131.95px;font-size:9.8px;color:#3b8a5e">1</div>
<div class="t" style="left:0;width:17px;text-align:center;top:144.03px;font-size:9.8px;color:#3b8a5e">2</div>
<div class="t" style="left:0;width:17px;text-align:center;top:156.12px;font-size:9.8px;color:#3b8a5e">3</div>
<div class="t" style="left:0;width:17px;text-align:center;top:168.20px;font-size:9.8px;color:#3b8a5e">4</div>
<div class="t" style="left:0;width:17px;text-align:center;top:180.29px;font-size:9.8px;color:#3b8a5e">5</div>
<div class="t" style="left:0;width:17px;text-align:center;top:192.38px;font-size:9.8px;color:#3b8a5e">6</div>
<div class="t" style="left:0;width:17px;text-align:center;top:204.46px;font-size:9.8px;color:#3b8a5e">7</div>
<div class="t" style="left:0;width:17px;text-align:center;top:216.54px;font-size:9.8px;color:#3b8a5e">8</div>
<div class="t" style="left:0;width:17px;text-align:center;top:228.63px;font-size:9.8px;color:#3b8a5e">9</div>
<div class="t" style="left:0;width:17px;text-align:center;top:240.72px;font-size:9.8px;color:#3b8a5e">10</div>
<div class="t" style="left:0;width:17px;text-align:center;top:252.80px;font-size:9.8px;color:#3b8a5e">11</div>
<div class="t" style="left:0;width:17px;text-align:center;top:264.88px;font-size:9.8px;color:#3b8a5e">12</div>
<div class="t" style="left:0;width:17px;text-align:center;top:276.97px;font-size:9.8px;color:#3b8a5e">13</div>
<div class="t" style="left:0;width:17px;text-align:center;top:289.06px;font-size:9.8px;color:#3b8a5e">14</div>
<div class="t" style="left:0;width:17px;text-align:center;top:301.14px;font-size:9.8px;color:#3b8a5e">15</div>
<div class="t" style="left:0;width:17px;text-align:center;top:313.23px;font-size:9.8px;color:#3b8a5e">16</div>
<div class="t" style="left:0;width:17px;text-align:center;top:325.31px;font-size:9.8px;color:#3b8a5e">17</div>
<div class="t" style="left:0;width:17px;text-align:center;top:337.40px;font-size:9.8px;color:#3b8a5e">18</div>
<div class="t" style="left:0;width:17px;text-align:center;top:349.48px;font-size:9.8px;color:#3b8a5e">19</div>
<div class="t" style="left:0;width:17px;text-align:center;top:361.57px;font-size:9.8px;color:#3b8a5e">20</div>
<div class="t" style="left:0;width:17px;text-align:center;top:373.65px;font-size:9.8px;color:#3b8a5e">21</div>
<div class="t" style="left:0;width:17px;text-align:center;top:385.74px;font-size:9.8px;color:#3b8a5e">22</div>
<div class="t" style="left:0;width:17px;text-align:center;top:397.82px;font-size:9.8px;color:#3b8a5e">23</div>
<div class="t" style="left:0;width:17px;text-align:center;top:409.91px;font-size:9.8px;color:#3b8a5e">24</div>
<div class="t" style="left:0;width:17px;text-align:center;top:421.99px;font-size:9.8px;color:#3b8a5e">25</div>
<div class="t" style="left:0;width:17px;text-align:center;top:434.08px;font-size:9.8px;color:#3b8a5e">26</div>
<div class="t" style="left:0;width:17px;text-align:center;top:446.16px;font-size:9.8px;color:#3b8a5e">27</div>
<div class="t" style="left:0;width:17px;text-align:center;top:458.25px;font-size:9.8px;color:#3b8a5e">28</div>
<div class="t" style="left:0;width:17px;text-align:center;top:470.33px;font-size:9.8px;color:#3b8a5e">29</div>
<div class="t" style="left:0;width:17px;text-align:center;top:482.42px;font-size:9.8px;color:#3b8a5e">30</div>
<div class="t" style="left:0;width:17px;text-align:center;top:494.50px;font-size:9.8px;color:#3b8a5e">31</div>
<div class="t" style="left:0;width:17px;text-align:center;top:506.59px;font-size:9.8px;color:#3b8a5e">32</div>
<div class="t" style="left:0;width:17px;text-align:center;top:518.67px;font-size:9.8px;color:#3b8a5e">33</div>
<div class="t" style="left:0;width:17px;text-align:center;top:530.75px;font-size:9.8px;color:#3b8a5e">34</div>
<div class="t" style="left:0;width:17px;text-align:center;top:542.84px;font-size:9.8px;color:#3b8a5e">35</div>
<div class="t" style="left:0;width:17px;text-align:center;top:554.93px;font-size:9.8px;color:#3b8a5e">36</div>
<div class="t" style="left:0;width:17px;text-align:center;top:567.01px;font-size:9.8px;color:#3b8a5e">37</div>
<div class="t" style="left:0;width:17px;text-align:center;top:579.10px;font-size:9.8px;color:#3b8a5e">38</div>
<div class="t" style="left:0;width:17px;text-align:center;top:591.18px;font-size:9.8px;color:#3b8a5e">39</div>
<div class="t" style="left:0;width:17px;text-align:center;top:603.27px;font-size:9.8px;color:#3b8a5e">40</div>
<div class="a" style="left:19px;top:130.85px;width:135.5px;height:11.085px;background:#fff"></div>
<div class="cell" style="left:20.10px;top:133.95px;">Gene/Locus</div>
<div class="cell" style="left:20.10px;top:146.03px;">PTPN22</div>
<div class="cell" style="left:162.20px;top:146.03px;">PEP</div>
<div class="cell" style="left:210.48px;top:146.03px;">PTPN8</div>
<div class="cell" style="left:258.76px;top:146.03px;">LYP</div>
<div class="cell" style="left:20.10px;top:158.12px;">PTPN22</div>
<div class="cell" style="left:162.20px;top:158.12px;">PEP</div>
<div class="cell" style="left:210.48px;top:158.12px;">PTPN8</div>
<div class="cell" style="left:258.76px;top:158.12px;">LYP</div>
<div class="cell" style="left:20.10px;top:170.20px;">PTPN22</div>
<div class="cell" style="left:162.20px;top:170.20px;">PEP</div>
<div class="cell" style="left:210.48px;top:170.20px;">PTPN8</div>
<div class="cell" style="left:258.76px;top:170.20px;">LYP</div>
<div class="cell" style="left:20.10px;top:182.29px;">MIA3</div>
<div class="cell" style="left:162.20px;top:182.29px;">TANGO1</div>
<div class="cell" style="left:210.48px;top:182.29px;">TANGO</div>
<div class="cell" style="left:258.76px;top:182.29px;width:40.6px;overflow:hidden;">KIAA0268</div>
<div class="cell" style="left:307.04px;top:182.29px;">ODCD2</div>
<div class="cell" style="left:20.10px;top:194.38px;">KLF11</div>
<div class="cell" style="left:162.20px;top:194.38px;">TIEG2</div>
<div class="cell" style="left:210.48px;top:194.38px;">FKLF1</div>
<div class="cell" style="left:258.76px;top:194.38px;">FKLF</div>
<div class="cell" style="left:307.04px;top:194.38px;">MODY7</div>
<div class="cell" style="left:20.10px;top:206.46px;">IL1RN</div>
<div class="cell" style="left:162.20px;top:206.46px;">MVCD4</div>
<div class="cell" style="left:210.48px;top:206.46px;">DIRA</div>
<div class="cell" style="left:258.76px;top:206.46px;">CRMO2</div>
<div class="cell" style="left:20.10px;top:218.54px;">IL1RN</div>
<div class="cell" style="left:162.20px;top:218.54px;">MVCD4</div>
<div class="cell" style="left:210.48px;top:218.54px;">DIRA</div>
<div class="cell" style="left:258.76px;top:218.54px;">CRMO2</div>
<div class="cell" style="left:20.10px;top:230.63px;">IL1RN</div>
<div class="cell" style="left:162.20px;top:230.63px;">MVCD4</div>
<div class="cell" style="left:210.48px;top:230.63px;">DIRA</div>
<div class="cell" style="left:258.76px;top:230.63px;">CRMO2</div>
<div class="cell" style="left:20.10px;top:242.72px;">IL1RN</div>
<div class="cell" style="left:162.20px;top:242.72px;">MVCD4</div>
<div class="cell" style="left:210.48px;top:242.72px;">DIRA</div>
<div class="cell" style="left:258.76px;top:242.72px;">CRMO2</div>
<div class="cell" style="left:20.10px;top:254.80px;">GPD2</div>
<div class="cell" style="left:20.10px;top:266.88px;">IDDM19</div>
<div class="cell" style="left:20.10px;top:278.97px;">IDDM7</div>
<div class="cell" style="left:20.10px;top:291.06px;">NEUROD1</div>
<div class="cell" style="left:162.20px;top:291.06px;">T2D</div>
<div class="cell" style="left:20.10px;top:303.14px;">NEUROD1</div>
<div class="cell" style="left:162.20px;top:303.14px;">T2D</div>
<div class="cell" style="left:20.10px;top:315.23px;">CTLA4</div>
<div class="cell" style="left:162.20px;top:315.23px;">IDDM12</div>
<div class="cell" style="left:210.48px;top:315.23px;">CELIAC3</div>
<div class="cell" style="left:258.76px;top:315.23px;">ALPS5</div>
<div class="cell" style="left:20.10px;top:327.31px;">CTLA4</div>
<div class="cell" style="left:162.20px;top:327.31px;">IDDM12</div>
<div class="cell" style="left:210.48px;top:327.31px;">CELIAC3</div>
<div class="cell" style="left:258.76px;top:327.31px;">ALPS5</div>
<div class="cell" style="left:20.10px;top:339.40px;">CTLA4</div>
<div class="cell" style="left:162.20px;top:339.40px;">IDDM12</div>
<div class="cell" style="left:210.48px;top:339.40px;">CELIAC3</div>
<div class="cell" style="left:258.76px;top:339.40px;">ALPS5</div>
<div class="cell" style="left:20.10px;top:351.48px;">CTLA4</div>
<div class="cell" style="left:162.20px;top:351.48px;">IDDM12</div>
<div class="cell" style="left:210.48px;top:351.48px;">CELIAC3</div>
<div class="cell" style="left:258.76px;top:351.48px;">ALPS5</div>
<div class="cell" style="left:20.10px;top:363.57px;">CTLA4</div>
<div class="cell" style="left:162.20px;top:363.57px;">IDDM12</div>
<div class="cell" style="left:210.48px;top:363.57px;">CELIAC3</div>
<div class="cell" style="left:258.76px;top:363.57px;">ALPS5</div>
<div class="cell" style="left:20.10px;top:375.65px;">IDDM13</div>
<div class="cell" style="left:20.10px;top:387.74px;">IRS1</div>
<div class="cell" style="left:20.10px;top:399.82px;">CAPN10</div>
<div class="cell" style="left:162.20px;top:399.82px;">NIDDM1</div>
<div class="cell" style="left:20.10px;top:411.91px;">PPARG</div>
<div class="cell" style="left:162.20px;top:411.91px;">PPARG1</div>
<div class="cell" style="left:210.48px;top:411.91px;">PPARG2</div>
<div class="cell" style="left:258.76px;top:411.91px;">FPLD3</div>
<div class="cell" style="left:20.10px;top:423.99px;">PPARG</div>
<div class="cell" style="left:162.20px;top:423.99px;">PPARG1</div>
<div class="cell" style="left:210.48px;top:423.99px;">PPARG2</div>
<div class="cell" style="left:258.76px;top:423.99px;">FPLD3</div>
<div class="cell" style="left:20.10px;top:436.08px;">PPARG</div>
<div class="cell" style="left:162.20px;top:436.08px;">PPARG1</div>
<div class="cell" style="left:210.48px;top:436.08px;">PPARG2</div>
<div class="cell" style="left:258.76px;top:436.08px;">FPLD3</div>
<div class="cell" style="left:20.10px;top:448.16px;">PPARG</div>
<div class="cell" style="left:162.20px;top:448.16px;">PPARG1</div>
<div class="cell" style="left:210.48px;top:448.16px;">PPARG2</div>
<div class="cell" style="left:258.76px;top:448.16px;">FPLD3</div>
<div class="cell" style="left:20.10px;top:460.25px;">CCR5</div>
<div class="cell" style="left:162.20px;top:460.25px;">CMKBR5</div>
<div class="cell" style="left:210.48px;top:460.25px;">CCCKR5</div>
<div class="cell" style="left:258.76px;top:460.25px;">IDDM22</div>
<div class="cell" style="left:20.10px;top:472.33px;">CCR5</div>
<div class="cell" style="left:162.20px;top:472.33px;">CMKBR5</div>
<div class="cell" style="left:210.48px;top:472.33px;">CCCKR5</div>
<div class="cell" style="left:258.76px;top:472.33px;">IDDM22</div>
<div class="cell" style="left:20.10px;top:484.42px;">CCR5</div>
<div class="cell" style="left:162.20px;top:484.42px;">CMKBR5</div>
<div class="cell" style="left:210.48px;top:484.42px;">CCCKR5</div>
<div class="cell" style="left:258.76px;top:484.42px;">IDDM22</div>
<div class="cell" style="left:20.10px;top:496.50px;">CCR5</div>
<div class="cell" style="left:162.20px;top:496.50px;">CMKBR5</div>
<div class="cell" style="left:210.48px;top:496.50px;">CCCKR5</div>
<div class="cell" style="left:258.76px;top:496.50px;">IDDM22</div>
<div class="cell" style="left:20.10px;top:508.59px;">MANF</div>
<div class="cell" style="left:162.20px;top:508.59px;">ARMET</div>
<div class="cell" style="left:210.48px;top:508.59px;">ARP</div>
<div class="cell" style="left:258.76px;top:508.59px;">DDDS</div>
<div class="cell" style="left:20.10px;top:520.67px;">APPL1</div>
<div class="cell" style="left:162.20px;top:520.67px;">APPL</div>
<div class="cell" style="left:210.48px;top:520.67px;">MODY14</div>
<div class="cell" style="left:20.10px;top:532.75px;">SLC2A2</div>
<div class="cell" style="left:162.20px;top:532.75px;">GLUT2</div>
<div class="cell" style="left:20.10px;top:544.84px;">SLC2A2</div>
<div class="cell" style="left:162.20px;top:544.84px;">GLUT2</div>
<div class="cell" style="left:20.10px;top:556.93px;">IGF2BP2</div>
<div class="cell" style="left:162.20px;top:556.93px;">IMP2</div>
<div class="cell" style="left:20.10px;top:569.01px;">WFS1</div>
<div class="cell" style="left:162.20px;top:569.01px;">WFRS</div>
<div class="cell" style="left:210.48px;top:569.01px;">WFS</div>
<div class="cell" style="left:258.76px;top:569.01px;">DFNA6</div>
<div class="cell" style="left:307.04px;top:569.01px;">DFNA14</div>
<div class="cell" style="left:355.32px;top:569.01px;">DFNA38</div>
<div class="cell" style="left:403.60px;top:569.01px;">WFSL</div>
<div class="cell" style="left:451.88px;top:569.01px;">CTRCT41</div>
<div class="cell" style="left:20.10px;top:581.10px;">WFS1</div>
<div class="cell" style="left:162.20px;top:581.10px;">WFRS</div>
<div class="cell" style="left:210.48px;top:581.10px;">WFS</div>
<div class="cell" style="left:258.76px;top:581.10px;">DFNA6</div>
<div class="cell" style="left:307.04px;top:581.10px;">DFNA14</div>
<div class="cell" style="left:355.32px;top:581.10px;">DFNA38</div>
<div class="cell" style="left:403.60px;top:581.10px;">WFSL</div>
<div class="cell" style="left:451.88px;top:581.10px;">CTRCT41</div>
<div class="cell" style="left:20.10px;top:593.18px;">WFS1</div>
<div class="cell" style="left:162.20px;top:593.18px;">WFRS</div>
<div class="cell" style="left:210.48px;top:593.18px;">WFS</div>
<div class="cell" style="left:258.76px;top:593.18px;">DFNA6</div>
<div class="cell" style="left:307.04px;top:593.18px;">DFNA14</div>
<div class="cell" style="left:355.32px;top:593.18px;">DFNA38</div>
<div class="cell" style="left:403.60px;top:593.18px;">WFSL</div>
<div class="cell" style="left:451.88px;top:593.18px;">CTRCT41</div>
<div class="cell" style="left:20.10px;top:605.27px;">WFS1</div>
<div class="cell" style="left:162.20px;top:605.27px;">WFRS</div>
<div class="cell" style="left:210.48px;top:605.27px;">WFS</div>
<div class="cell" style="left:258.76px;top:605.27px;">DFNA6</div>
<div class="cell" style="left:307.04px;top:605.27px;">DFNA14</div>
<div class="cell" style="left:355.32px;top:605.27px;">DFNA38</div>
<div class="cell" style="left:403.60px;top:605.27px;">WFSL</div>
<div class="cell" style="left:451.88px;top:605.27px;">CTRCT41</div>
<div class="a" style="left:350.5px;top:245.5px;width:256px;height:148.5px;box-shadow:2px 2px 9px rgba(0,0,0,0.26)"></div>
<div class="a" style="left:350.5px;top:245.5px;width:256px;height:148.5px;background:#f0f0f0;border:1px solid #a8a8a8"></div>
<div class="a" style="left:351.5px;top:246.5px;width:254px;height:20px;background:#fff"></div>
<div class="t" style="left:355.5px;top:251.3px;font-size:7.8px;color:#1e1e1e;line-height:10px">删除重复项警告</div>
<div class="t" style="left:558.5px;top:251px;font-size:8.5px;color:#333;line-height:10px">?</div>
<svg style="left:587.5px;top:252.5px" width="8" height="8"><path d="M0.5 0.5l7 7M7.5 0.5l-7 7" stroke="#222" stroke-width="0.9"/></svg>
<div class="t" style="left:355.3px;top:273.5px;font-size:7.8px;color:#1e1e1e;line-height:10px;font-size:8px"><span class="lat" style="font-size:8.8px;letter-spacing:0px">Microsoft Excel</span> 在选定区域旁找到数据。由于您未选定此数据，因此</div>
<div class="t" style="left:355.3px;top:286.6px;font-size:7.8px;color:#1e1e1e;line-height:10px">无法将其删除。</div>
<div class="t" style="left:355.1px;top:307px;font-size:7.8px;color:#1e1e1e;line-height:10px">给出排序依据</div>
<div class="a" style="left:406.5px;top:311px;width:196px;height:1px;background:#dcdcdc"></div>
<svg style="left:359px;top:324px" width="12" height="28"><circle cx="5.7" cy="5.8" r="4.3" fill="#fff" stroke="#333" stroke-width="0.9"/><circle cx="5.7" cy="22" r="4.3" fill="#fff" stroke="#333" stroke-width="0.9"/><circle cx="5.7" cy="22" r="2.1" fill="#1e1e1e"/></svg>
<div class="t" style="left:372px;top:325px;font-size:7.8px;color:#1e1e1e;line-height:10px">扩展选定区域<span style="font-size:8.6px">(<u>E</u>)</span></div>
<div class="t" style="left:372.5px;top:341px;font-size:7.8px;color:#1e1e1e;line-height:10px">以当前选定区域排序<span style="font-size:8.6px">(<u>C</u>)</span></div>
<div class="a" style="left:371px;top:340.2px;width:86px;height:13px;border:1px dotted #8a8a8a"></div>
<div class="a" style="left:477px;top:367.8px;width:68.2px;height:19px;background:#e5f1fb;border:1.3px solid #0078d7"></div>
<div class="a" style="left:478.3px;top:369.1px;width:65.6px;height:16.4px;background:#e1e1e1"></div>
<div class="t" style="left:482px;top:373.2px;font-size:7.8px;color:#1e1e1e;line-height:10px">删除重复项<span style="font-size:8.6px">(<u>R</u>)...</span></div>
<div class="a" style="left:552px;top:367.8px;width:50px;height:19.2px;background:#e1e1e1;border:1px solid #adadad"></div>
<div class="t" style="left:569px;top:373.2px;font-size:7.8px;color:#1e1e1e;line-height:10px">取消</div>
<div class="a" style="left:15.6px;top:114.8px;width:146.0px;height:18.500000000000014px;border:2px solid #f23a3a"></div>
<div class="a" style="left:21.7px;top:100.8px;width:13.0px;height:13.0px;border-radius:50%;background:#f23a3a"></div>
<div class="t" style="left:21.7px;top:102.7px;width:13.0px;text-align:center;font-size:9.4px;color:#fff;line-height:10px">1</div>
<div class="a" style="left:638.8px;top:16px;width:49.40000000000009px;height:57px;border:2px solid #f23a3a"></div>
<div class="a" style="left:625.1999999999999px;top:6.6px;width:13.2px;height:13.2px;border-radius:50%;background:#f23a3a"></div>
<div class="t" style="left:625.1999999999999px;top:8.6px;width:13.2px;text-align:center;font-size:9.4px;color:#fff;line-height:10px">2</div>
<div class="a" style="left:352.6px;top:335.5px;width:119.0px;height:25.100000000000023px;border:2px solid #f23a3a"></div>
<div class="a" style="left:473.6px;top:338.1px;width:13.4px;height:13.4px;border-radius:50%;background:#f23a3a"></div>
<div class="t" style="left:473.6px;top:340.2px;width:13.4px;text-align:center;font-size:9.4px;color:#fff;line-height:10px">3</div>
<div class="a" style="left:471px;top:365.4px;width:78.5px;height:27.400000000000034px;border:2px solid #f23a3a"></div>
</body></html>
